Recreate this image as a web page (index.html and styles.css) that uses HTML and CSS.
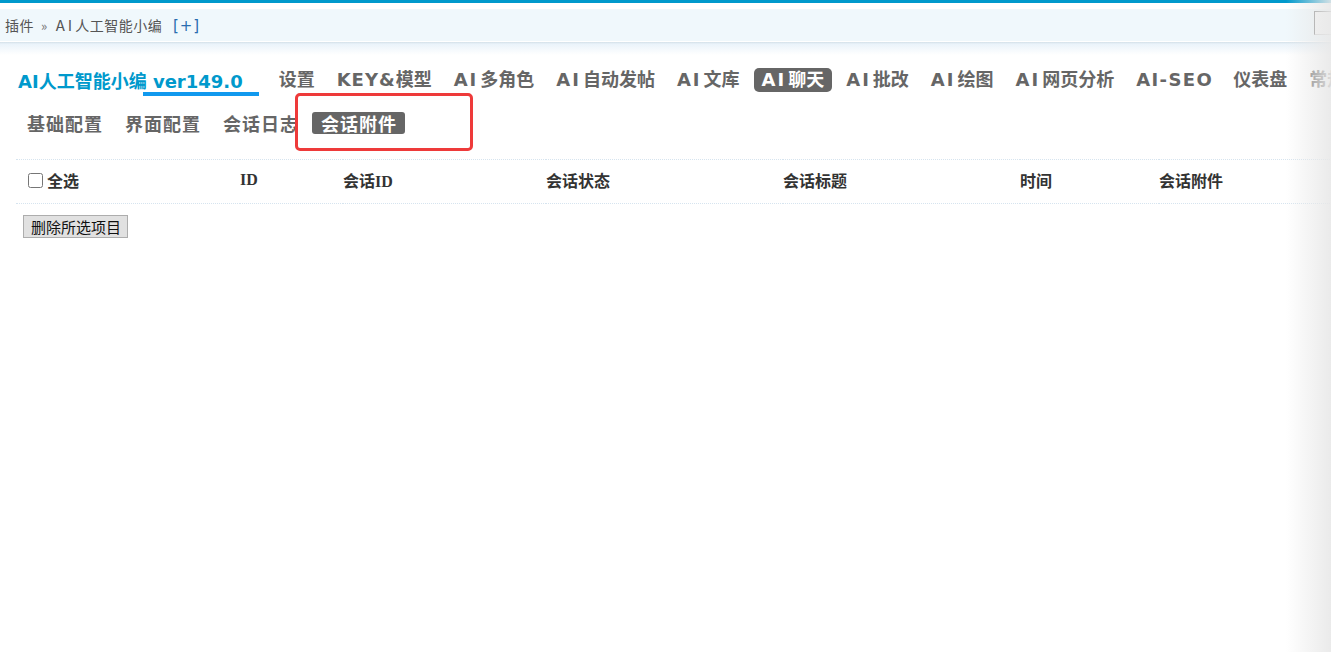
FILE: index.html
```html
<!DOCTYPE html>
<html lang="zh-CN">
<head>
    <meta charset="UTF-8">
    <meta name="viewport" content="width=device-width, initial-scale=1.0">
    <title>插件 - AI人工智能小编</title>
    <link rel="stylesheet" href="styles.css">
</head>
<body>
    <div class="top-bar">
        <div class="breadcrumb">
            <span>插件</span><span class="sep">&raquo;</span><span><span class="en">AI</span>人工智能小编</span>
            <a class="add-link">[+]</a>
        </div>
        <input class="top-search" type="text">
    </div>
    <div class="top-fade"></div>

    <div class="main">
        <!-- Menu principal -->
        <div class="main-nav">
            <span class="plugin-title">AI人工智能小编 <span class="ver">ver149.0</span></span>
            <a class="nav-item">设置</a>
            <a class="nav-item"><span class="en">KEY&amp;</span>模型</a>
            <a class="nav-item"><span class="ai">AI</span>多角色</a>
            <a class="nav-item"><span class="ai">AI</span>自动发帖</a>
            <a class="nav-item"><span class="ai">AI</span>文库</a>
            <a class="nav-item active"><span class="ai">AI</span>聊天</a>
            <a class="nav-item"><span class="ai">AI</span>批改</a>
            <a class="nav-item"><span class="ai">AI</span>绘图</a>
            <a class="nav-item"><span class="ai">AI</span>网页分析</a>
            <a class="nav-item"><span class="en seo">AI-SEO</span></a>
            <a class="nav-item">仪表盘</a>
            <a class="nav-item">常规</a>
        </div>

        <!-- Submenu -->
        <div class="sub-nav">
            <a class="sub-item">基础配置</a>
            <a class="sub-item">界面配置</a>
            <a class="sub-item">会话日志</a>
            <a class="sub-item active">会话附件</a>
            <div class="highlight-box"></div>
        </div>

        <table class="list-table">
            <thead>
                <tr>
                    <th class="col-check"><label><input type="checkbox" class="check-all">全选</label></th>
                    <th class="col-id">ID</th>
                    <th class="col-sid">会话ID</th>
                    <th class="col-status">会话状态</th>
                    <th class="col-title">会话标题</th>
                    <th class="col-time">时间</th>
                    <th class="col-file">会话附件</th>
                </tr>
            </thead>
            <tbody></tbody>
        </table>

        <button type="button" class="btn-delete">删除所选项目</button>
    </div>

    <div class="right-shade"></div>
</body>
</html>
```

FILE: styles.css
```css
body {
    margin: 0;
    background-color: #fff;
    font-family: "DejaVu Sans", "Noto Sans CJK SC", sans-serif;
    color: #666;
    overflow: hidden;
    height: 652px;
    position: relative;
}

a {
    text-decoration: none;
}

.top-bar {
    border-top: 3px solid #0099cc;
    padding-top: 6px;
    background-color: #fff;
    position: relative;
}

.breadcrumb {
    background-color: #f0f8fc;
    height: 32px;
    line-height: 31px;
    padding-left: 5px;
    font-family: "Noto Sans CJK SC", sans-serif;
    font-size: 14px;
    letter-spacing: 0.5px;
    color: #555;
    border-bottom: 1px solid #fff;
}

.breadcrumb .en {
    letter-spacing: 3px;
    font-size: 15px;
}

.breadcrumb .sep {
    color: #777;
    font-size: 13px;
    margin: 0 8px 0 7px;
}

.add-link {
    color: #2a6db0;
    margin-left: 7px;
    font-family: "DejaVu Sans", sans-serif;
    font-size: 15px;
    letter-spacing: 1px;
}

.top-search {
    position: absolute;
    top: 8px;
    right: -40px;
    width: 56px;
    height: 22px;
    border: 1px solid #777;
    border-right: none;
    border-bottom-color: #ccc;
    background-color: #f6f6f6;
    padding: 0;
}

.top-fade {
    height: 13px;
    background: linear-gradient(#d3e0e8, #eaf3fa 2px, #fff);
}

.main {
    padding: 0 0 0 16px;
    white-space: nowrap;
}

.main-nav {
    display: flex;
    align-items: center;
    margin-top: 12px;
    height: 26px;
    font-size: 18px;
    font-weight: bold;
}

.main-nav .en {
    letter-spacing: 1px;
}

.main-nav .seo {
    letter-spacing: 1.4px;
    margin-right: -2px;
}

.main-nav .ai {
    letter-spacing: 2px;
    padding-right: 2px;
}

.plugin-title {
    color: #0099cc;
    margin-left: 2px;
    margin-right: 28px;
}

.plugin-title .ver {
    position: relative;
    display: inline-block;
}

.plugin-title .ver::after {
    content: "";
    position: absolute;
    left: -10px;
    right: -16px;
    bottom: -4px;
    height: 4px;
    background-color: #1199ee;
}

.nav-item {
    color: #666;
    padding: 0 8px;
    margin-right: 6px;
    border-radius: 5px;
    line-height: 24px;
}

.nav-item.active {
    background-color: #666;
    color: #fff;
}

.sub-nav {
    display: flex;
    align-items: center;
    position: relative;
    margin-top: 18px;
    height: 24px;
    font-size: 18px;
    font-weight: bold;
    font-family: "Noto Sans CJK SC", sans-serif;
    padding-left: 2px;
}

.sub-item {
    color: #666;
    padding: 0 8px 0 9px;
    margin-right: 5px;
    letter-spacing: 1px;
    line-height: 22px;
}

.sub-item.active {
    background-color: #666;
    color: #fff;
    border-radius: 3px;
}

.highlight-box {
    position: absolute;
    left: 279px;
    top: -18px;
    width: 172px;
    height: 52px;
    border: 3px solid #ee3a3a;
    border-radius: 5px;
}

.list-table {
    margin-top: 24px;
    width: 1330px;
    border-collapse: collapse;
    font-family: "Liberation Serif", "Noto Sans CJK SC", serif;
    font-size: 16px;
    color: #333;
}

.list-table th {
    text-align: left;
    font-weight: bold;
    height: 40px;
    padding: 0 0 3px;
    border-top: 1px dotted #d6e4ef;
    border-bottom: 1px dotted #d6e4ef;
}

.list-table label {
    display: flex;
    align-items: center;
}

.check-all {
    margin: 1px 4px 0 0;
    width: 15px;
    height: 15px;
}

.col-check { width: 212px; padding-left: 12px !important; }
.col-id { width: 103px; }
.col-sid { width: 203px; }
.col-status { width: 237px; }
.col-title { width: 237px; }
.col-time { width: 139px; }

.btn-delete {
    margin: 11px 0 0 7px;
    font-family: "Noto Sans CJK SC", sans-serif;
    font-size: 15px;
    color: #111;
    background-color: #e1e1e1;
    border: 1px solid #adadad;
    border-radius: 0;
    padding: 0 6px 0 7px;
    height: 23px;
    line-height: 20px;
}

.right-shade {
    position: absolute;
    top: 0;
    right: 0;
    width: 45px;
    height: 100%;
    background: linear-gradient(to right, rgba(240, 240, 240, 0), rgba(232, 232, 232, 0.9));
    pointer-events: none;
}
```
